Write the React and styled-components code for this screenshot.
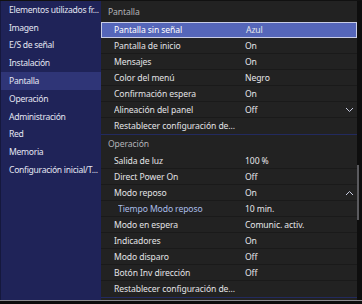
import styled, { createGlobalStyle } from "styled-components";

const GlobalStyle = createGlobalStyle`
  html, body {
    margin: 0;
    padding: 0;
    background: #0c0c0c;
  }
  * {
    box-sizing: border-box;
  }
`;

const Frame = styled.div`
  width: 362px;
  height: 304px;
  display: flex;
  flex-wrap: wrap;
  align-content: flex-start;
  background: #0c0c0c;
  border-top: 1px solid #111;
  font-family: "Noto Sans", "Open Sans", sans-serif;
  font-size: 8.6px;
  letter-spacing: -0.1px;
  color: #e6e6ea;
  overflow: hidden;
`;

const Sidebar = styled.nav`
  width: 101px;
  height: 299px;
  background: #1f2358;
  border-left: 1px solid #15183d;
  display: flex;
  flex-direction: column;
`;

const NavItem = styled.div`
  height: 17.8px;
  display: flex;
  align-items: center;
  padding-left: 8px;
  white-space: nowrap;
  letter-spacing: -0.3px;
  background: ${(p) => (p.$active ? "#2f3577" : "transparent")};
  color: #e4e6f2;
`;

const Panel = styled.main`
  width: 256px;
  height: 299px;
  background: #222222;
  display: flex;
  flex-direction: column;
`;

const Section = styled.section`
  display: flex;
  flex-direction: column;
  border-bottom: 1px solid #222a5e;
`;

const Header = styled.div`
  height: ${(p) => p.$h}px;
  display: flex;
  align-items: center;
  padding-left: 7px;
  color: #b4b4b8;
`;

const Row = styled.div`
  height: 16px;
  display: grid;
  grid-template-columns: ${(p) => (p.$sub ? 127 : 131)}px 100px 9px;
  align-items: center;
  padding-left: ${(p) => (p.$sub ? 17 : 13)}px;
  border-bottom: 1px solid #1a1a1a;
  white-space: nowrap;
  color: ${(p) => (p.$sub ? "#a9bde8" : "#e2e2e6")};
  ${(p) =>
    p.$selected &&
    `
    background: #5566b9;
    border: 1px solid #c9cde6;
    padding-left: 12px;
    grid-template-columns: 132px 100px 9px;
    color: #ffffff;
  `}
  &:last-child {
    border-bottom: none;
  }
`;

const Label = styled.span`
  overflow: hidden;
`;

const Wide = styled.span`
  grid-column: 1 / 4;
`;

const Value = styled.span`
  color: #e6e6ea;
`;

const Chevron = styled.svg`
  width: 9px;
  height: 6px;
`;

const Track = styled.div`
  width: 5px;
  height: 299px;
  background: #0e0e0e;
  padding-top: 164px;
`;

const Thumb = styled.div`
  width: 2px;
  height: 55px;
  background: #5a5a5e;
`;

const BottomRule = styled.div`
  width: 362px;
  height: 1px;
  background: #8c8c90;
`;

const Down = () => (
  <Chevron viewBox="0 0 9 6">
    <path d="M1 1 L4.5 4.5 L8 1" fill="none" stroke="#c8cce0" strokeWidth="1" />
  </Chevron>
);

const Up = () => (
  <Chevron viewBox="0 0 9 6">
    <path d="M1 5 L4.5 1.5 L8 5" fill="none" stroke="#c8cce0" strokeWidth="1" />
  </Chevron>
);

const nav = [
  "Elementos utilizados fr...",
  "Imagen",
  "E/S de señal",
  "Instalación",
  "Pantalla",
  "Operación",
  "Administración",
  "Red",
  "Memoria",
  "Configuración inicial/T...",
];

const pantalla = [
  { label: "Pantalla sin señal", value: "Azul", selected: true },
  { label: "Pantalla de inicio", value: "On" },
  { label: "Mensajes", value: "On" },
  { label: "Color del menú", value: "Negro" },
  { label: "Confirmación espera", value: "On" },
  { label: "Alineación del panel", value: "Off", icon: "down" },
  { label: "Restablecer configuración de..." },
];

const operacion = [
  { label: "Salida de luz", value: "100 %" },
  { label: "Direct Power On", value: "Off" },
  { label: "Modo reposo", value: "On", icon: "up" },
  { label: "Tiempo Modo reposo", value: "10 min.", sub: true },
  { label: "Modo en espera", value: "Comunic. activ." },
  { label: "Indicadores", value: "On" },
  { label: "Modo disparo", value: "Off" },
  { label: "Botón Inv dirección", value: "Off" },
  { label: "Restablecer configuración de..." },
];

const renderRow = (r) => (
  <Row key={r.label} $selected={r.selected} $sub={r.sub}>
    {r.value === undefined ? (
      <Wide>{r.label}</Wide>
    ) : (
      <>
        <Label>{r.label}</Label>
        <Value>{r.value}</Value>
        {r.icon === "down" ? <Down /> : r.icon === "up" ? <Up /> : <span />}
      </>
    )}
  </Row>
);

export default function App() {
  return (
    <>
      <GlobalStyle />
      <Frame>
        <Sidebar>
          {nav.map((n) => (
            <NavItem key={n} $active={n === "Pantalla"}>
              {n}
            </NavItem>
          ))}
        </Sidebar>
        <Panel>
          <Section>
            <Header $h={21}>Pantalla</Header>
            {pantalla.map(renderRow)}
          </Section>
          <Section>
            <Header $h={18}>Operación</Header>
            {operacion.map(renderRow)}
          </Section>
        </Panel>
        <Track>
          <Thumb />
        </Track>
        <BottomRule />
      </Frame>
    </>
  );
}
